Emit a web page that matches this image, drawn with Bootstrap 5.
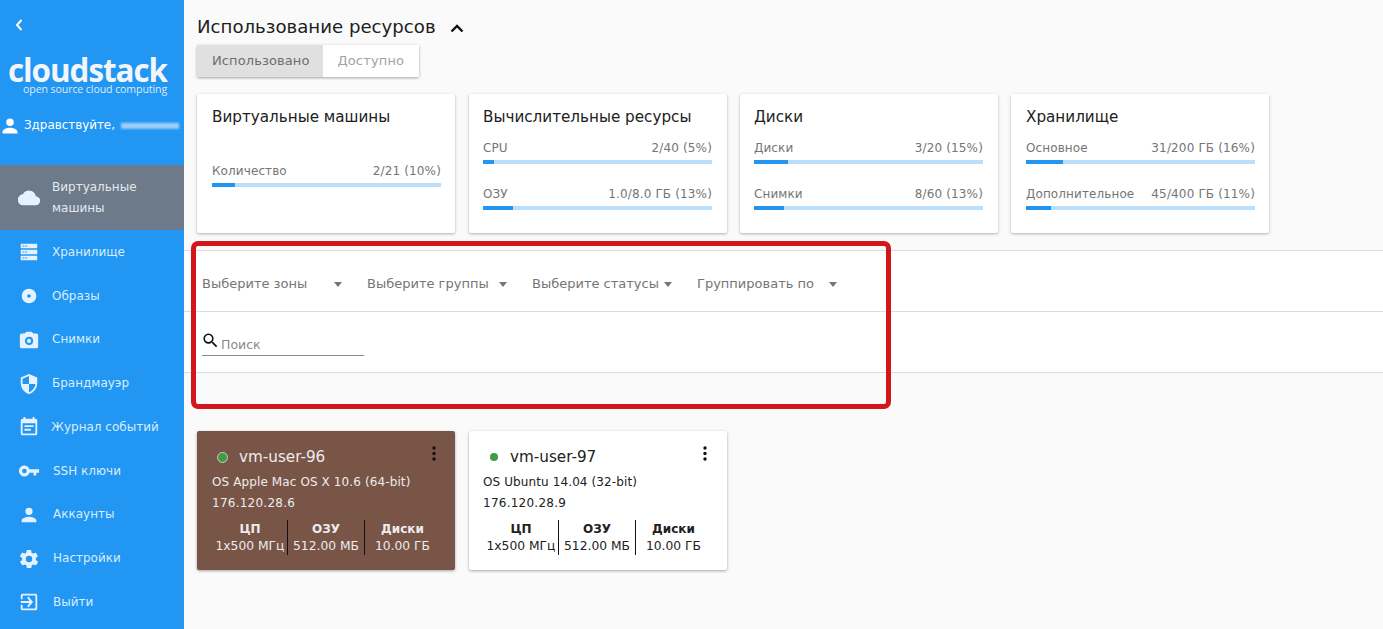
<!DOCTYPE html>
<html lang="ru">
<head>
  <meta charset="UTF-8" />
  <meta name="viewport" content="width=device-width, initial-scale=1.0" />
  <title>CloudStack</title>
  <link href="https://cdn.jsdelivr.net/npm/bootstrap@5.3.0/dist/css/bootstrap.min.css" rel="stylesheet">
  <style>
    html, body { height: 100%; overflow: hidden; }
    body { background: #fafafa; font-family: "DejaVu Sans", sans-serif; color: #212121; font-size: 13px; }
    .app-shell { height: 629px; }
    /* sidebar */
    .side-panel { width: 184px; flex: none; background: #2196f3; color: #fff; height: 629px; overflow: hidden; }
    .side-back { height: 50px; padding: 14px 0 0 14px; }
    .side-logo { height: 50px; margin-top: 3px; padding-left: 8px; line-height: 1; }
    .logo-main { font-family: "Open Sans", sans-serif; font-weight: 700; font-size: 31.4px; letter-spacing: -1.05px; color: #f2f6fa; line-height: 34px; height: 31px; }
    .logo-sub { font-family: "Open Sans", sans-serif; font-size: 10.6px; color: #dcebfa; padding-left: 15px; letter-spacing: -.1px; line-height: 11px; white-space: nowrap; }
    .side-user { margin-top: 8px; height: 30px; font-size: 11.9px; white-space: nowrap; gap: 4px; }
    .blur-name { width: 58px; height: 6px; margin-left: 2px; background: repeating-linear-gradient(180deg, #c4e1fb 0 2px, #8cc6f8 2px 3px); filter: blur(1px); opacity: .85; }
    .side-menu { margin-top: 24px; background: transparent; border-radius: 0; }
    .side-item { background: transparent; border: 0; color: #d9edfe; font-size: 12px; padding: 0 0 0 18px; height: 43.75px; gap: 12px; border-radius: 0 !important; line-height: 21px; }
    .side-item.is-on { background: #6c7a89; height: 65px; color: #e4e9ee; margin-bottom: .4px; }
    .side-item svg { width: 22px; height: 22px; fill: #e3f2fe; flex: none; }
    .nudge-right { margin-left: 1px; }
    .nudge-left { margin-left: -1px; white-space: nowrap; }
    /* main */
    .main-area { min-width: 0; }
    .usage-part { padding: 15px 13px 17px; }
    .usage-title { font-size: 18.15px; font-weight: 400; margin: 0; line-height: 22px; color: #212121; }
    .usage-title svg { width: 24px; height: 24px; margin-left: 9px; }
    .toggle-set { margin-top: 6px; height: 32px; box-shadow: 0 1px 3px rgba(0,0,0,.35); border-radius: 2px; background: #fff; width: max-content; }
    .toggle-btn { border: 0; border-radius: 0 !important; font-size: 13px; padding: 0 14px 0 15px; color: #757575; background: #fff; letter-spacing: .1px; }
    .toggle-btn.is-on { background: #e0e0e0; color: #6e6e6e; padding: 0 15px; }
    .toggle-btn.is-off { color: #a3a3a3; padding: 0 15px 0 14px; letter-spacing: .15px; }
    .usage-cards { margin-top: 17px; gap: 13px; }
    .usage-box { width: 258px; height: 139px; border: 0; border-radius: 2px; box-shadow: 0 1px 3px rgba(0,0,0,.3); background: #fff; padding: 13px 14px 0 15px; }
    .usage-box:nth-child(2) { margin-left: 1px; }
    .usage-box:nth-child(2), .usage-box:nth-child(3) { padding-left: 14px; padding-right: 15px; }
    .usage-box h6 { font-size: 15.2px; font-weight: 400; margin: 0; line-height: 21px; }
    .meter-stack { height: 78px; margin-top: 8px; gap: 22px; }
    .meter-text { font-size: 12px; color: #757575; line-height: 16px; white-space: nowrap; letter-spacing: .1px; }
    .meter-text span + span { letter-spacing: .15px; }
    .meter-bar { height: 4px; background: #bbdefb; border-radius: 0; margin-top: 4px; }
    .meter-bar .progress-bar { background: #2196f3; }
    .filter-row { height: 61px; border-top: 1px solid #dcdcdc; background: #fff; padding-left: 18px; font-size: 13px; color: #757575; }
    .filter-top { padding-top: 6px; gap: 25px; }
    .filter-end { border-bottom: 1px solid #dcdcdc; height: 62px; }
    .filter-pick { width: 140px; color: #757575; font-size: 13px; padding: 0; white-space: nowrap; display: flex; align-items: center; justify-content: space-between; }
    .filter-pick::after { content: ""; width: 0; height: 0; border-left: 4.5px solid transparent; border-right: 4.5px solid transparent; border-top: 5px solid #757575; }
    .search-wrap { width: 162px; height: 26px; border-bottom: 1px solid #8a8a8a; margin-top: 18px; gap: 0; }
    .search-wrap svg { width: 19px; height: 19px; flex: none; margin-top: -5px; margin-left: -1px; }
    .search-wrap input { border: 0; outline: 0; padding: 6px 0 0 1px; background: transparent; font-size: 12.5px; width: 130px; }
    .search-wrap input::placeholder { color: #8a8a8a; }
    .vm-row { padding: 58px 13px 0; gap: 14px; }
    .vm-box { width: 258px; height: 139px; border: 0; border-radius: 2px; box-shadow: 0 1px 3px rgba(0,0,0,.35); background: #fff; padding: 15px 15px 0; position: relative; color: #212121; font-size: 12px; }
    .vm-box + .vm-box { padding-left: 14px; }
    .vm-box + .vm-box .vm-name { padding-left: 7px; }
    .vm-box + .vm-box .vm-more { right: 14px; }
    .vm-box.is-picked { background: #795548; color: #ececec; }
    .vm-name { font-size: 15.2px; line-height: 22px; gap: 12px; padding-left: 6px; }
    .vm-dot { width: 8px; height: 8px; background: #419b45; border-radius: 50%; flex: none; }
    .is-picked .vm-dot { width: 11px; height: 11px; border: 1px solid #c8d0c0; margin-left: -1px; margin-right: -1px; }
    .vm-more { position: absolute; top: 14px; right: 13px; width: 16px; height: 18px; }
    .vm-line { line-height: 21px; white-space: nowrap; letter-spacing: .11px; }
    .vm-ip { letter-spacing: .25px; }
    .vm-stats { margin: 6px 0 0 1px; font-size: 12.3px; flex-wrap: nowrap; }
    .vm-stat { text-align: center; line-height: 17px; white-space: nowrap; height: 35px; padding-top: 1px; }
    .vm-stat:nth-child(1) { flex: 0 0 74px; }
    .vm-stat:nth-child(2) { flex: 0 0 77px; }
    .vm-stat:nth-child(3) { flex: 0 0 76px; }
    .vm-stat b { display: block; font-weight: 700; font-size: 12px; }
    .vm-stat + .vm-stat { border-left: 1px solid #111; }
    .mark-box { position: absolute; left: 191px; top: 241px; width: 700px; height: 168px; border: 5px solid #d3161c; border-radius: 7px; pointer-events: none; }
  </style>
</head>
<body>
  <div class="d-flex app-shell position-relative">

    <!-- Sidebar -->
    <aside class="side-panel">
      <div class="side-back">
        <svg width="10" height="14" viewBox="0 0 10 14"><path d="M7.5 2 3 7l4.5 5" fill="none" stroke="#fff" stroke-width="2"/></svg>
      </div>
      <div class="side-logo">
        <div class="logo-main">cloudstack</div>
        <div class="logo-sub">open source cloud computing</div>
      </div>
      <div class="side-user d-flex align-items-center">
        <svg width="20" height="20" viewBox="0 0 24 24" fill="#fff"><path d="M12 12a4.5 4.5 0 1 0 0-9 4.5 4.5 0 0 0 0 9Zm0 2c-3.3 0-9 1.7-9 5v2h18v-2c0-3.3-5.700-5-9-5Z"/></svg>
        <span>Здравствуйте,</span><span class="blur-name"></span>
      </div>
      <div class="list-group side-menu">
        <a class="list-group-item side-item is-on d-flex align-items-center">
          <svg viewBox="0 0 24 24"><path d="M19.400 10A7.500 7.500 0 0 0 5.400 8 6 6 0 0 0 6 20h13a5 5 0 0 0 .4-10Z"/></svg>
          <span>Виртуальные<br>машины</span>
        </a>
        <a class="list-group-item side-item d-flex align-items-center">
          <svg viewBox="0 0 24 24"><path d="M3 3h18v5H3zM3 9.500h18v5H3zM3 16h18v5H3z"/><path fill="#2196f3" d="M5 5h2v1H5zM8 5h2v1H8zM5 11.500h2v1H5zM8 11.500h2v1H8zM5 18h2v1H5zM8 18h2v1H8z"/></svg>
          <span>Хранилище</span>
        </a>
        <a class="list-group-item side-item d-flex align-items-center">
          <svg viewBox="0 0 24 24"><path fill-rule="evenodd" d="M12 4a8 8 0 1 0 0 16 8 8 0 0 0 0-16Zm0 6a2 2 0 1 1 0 4 2 2 0 0 1 0-4Z"/></svg>
          <span>Образы</span>
        </a>
        <a class="list-group-item side-item d-flex align-items-center">
          <svg viewBox="0 0 24 24"><path fill-rule="evenodd" d="M9 3 7.200 5H4a2 2 0 0 0-2 2v12a2 2 0 0 0 2 2h16a2 2 0 0 0 2-2V7a2 2 0 0 0-2-2h-3.200L15 3H9Zm3 14.500a4.500 4.500 0 1 1 0-9 4.500 4.500 0 0 1 0 9Zm0-2.200a2.300 2.300 0 1 0 0-4.600 2.300 2.300 0 0 0 0 4.600Z"/></svg>
          <span>Снимки</span>
        </a>
        <a class="list-group-item side-item d-flex align-items-center">
          <svg viewBox="0 0 24 24"><path fill-rule="evenodd" d="M12 1 3 5v6c0 5.500 3.800 10.700 9 12 5.200-1.300 9-6.500 9-12V5l-9-4Zm0 11h7c-.5 4.100-3.300 7.800-7 8.900V12H5V6.300l7-3.100V12Z"/></svg>
          <span>Брандмауэр</span>
        </a>
        <a class="list-group-item side-item d-flex align-items-center">
          <svg viewBox="0 0 24 24"><path fill-rule="evenodd" d="M19 3h-1V1h-2v2H8V1H6v2H5a2 2 0 0 0-2 2v14a2 2 0 0 0 2 2h14a2 2 0 0 0 2-2V5a2 2 0 0 0-2-2Zm0 16H5V8h14v11ZM7 10h10v2H7zm0 4h7v2H7z"/></svg>
          <span class="nudge-left">Журнал событий</span>
        </a>
        <a class="list-group-item side-item d-flex align-items-center">
          <svg viewBox="0 0 24 24"><path fill-rule="evenodd" d="M12.600 10a6 6 0 1 0 0 4H17v3h3v-3h3v-4H12.600ZM7 14.500a2.500 2.500 0 1 1 0-5 2.500 2.500 0 0 1 0 5Z"/></svg>
          <span class="nudge-right">SSH ключи</span>
        </a>
        <a class="list-group-item side-item d-flex align-items-center">
          <svg viewBox="0 0 24 24"><path d="M12 12a4 4 0 1 0 0-8 4 4 0 0 0 0 8Zm0 2c-2.700 0-8 1.300-8 4v2h16v-2c0-2.700-5.300-4-8-4Z"/></svg>
          <span class="nudge-right">Аккаунты</span>
        </a>
        <a class="list-group-item side-item d-flex align-items-center">
          <svg viewBox="0 0 24 24"><path fill-rule="evenodd" d="M19.400 13c0-.3.1-.6.1-1s0-.7-.1-1l2.100-1.600c.2-.1.2-.4.1-.6l-2-3.500c-.1-.2-.4-.3-.6-.2l-2.500 1a7 7 0 0 0-1.700-1l-.4-2.600c0-.3-.2-.4-.5-.4h-4c-.3 0-.5.100-.5.400l-.4 2.600a7 7 0 0 0-1.700 1l-2.500-1c-.2-.1-.5 0-.6.2l-2 3.500c-.1.200-.1.500.1.600L4.600 11c0 .3-.1.700-.1 1s0 .7.1 1l-2.100 1.600c-.2.1-.2.4-.1.600l2 3.500c.1.200.4.300.6.200l2.500-1c.5.400 1.100.700 1.700 1l.4 2.600c0 .3.200.4.500.4h4c.3 0 .5-.1.500-.4l.4-2.600a7 7 0 0 0 1.700-1l2.500 1c.2.1.5 0 .6-.2l2-3.500c.1-.2.1-.5-.1-.6L19.400 13ZM12 15.500a3.500 3.500 0 1 1 0-7 3.500 3.500 0 0 1 0 7Z"/></svg>
          <span class="nudge-right">Настройки</span>
        </a>
        <a class="list-group-item side-item d-flex align-items-center">
          <svg viewBox="0 0 24 24"><path fill-rule="evenodd" d="M10 16.600 11.400 18l5-6-5-6L10 7.400l2.600 3.600H3v2h9.600L10 16.600ZM19 3H5a2 2 0 0 0-2 2v4h2V5h14v14H5v-4H3v4a2 2 0 0 0 2 2h14a2 2 0 0 0 2-2V5a2 2 0 0 0-2-2Z"/></svg>
          <span class="nudge-right">Выйти</span>
        </a>
      </div>
    </aside>

    <!-- Main -->
    <main class="main-area flex-grow-1">
      <section class="usage-part">
        <h5 class="usage-title d-flex align-items-center">Использование ресурсов
          <svg viewBox="0 0 24 24"><path d="M6.500 16.500 12 11l5.500 5.500" fill="none" stroke="#111" stroke-width="2.400"/></svg>
        </h5>
        <div class="btn-group toggle-set">
          <button class="btn toggle-btn is-on">Использовано</button>
          <button class="btn toggle-btn is-off">Доступно</button>
        </div>
        <div class="d-flex usage-cards">
          <div class="card usage-box">
            <h6>Виртуальные машины</h6>
            <div class="meter-stack d-flex flex-column justify-content-center">
              <div>
                <div class="d-flex justify-content-between meter-text"><span>Количество</span><span>2/21 (10%)</span></div>
                <div class="progress meter-bar"><div class="progress-bar" style="width:10%"></div></div>
              </div>
            </div>
          </div>
          <div class="card usage-box">
            <h6>Вычислительные ресурсы</h6>
            <div class="meter-stack d-flex flex-column justify-content-center">
              <div>
                <div class="d-flex justify-content-between meter-text"><span>CPU</span><span>2/40 (5%)</span></div>
                <div class="progress meter-bar"><div class="progress-bar" style="width:5%"></div></div>
              </div>
              <div>
                <div class="d-flex justify-content-between meter-text"><span>ОЗУ</span><span>1.0/8.0 ГБ (13%)</span></div>
                <div class="progress meter-bar"><div class="progress-bar" style="width:13%"></div></div>
              </div>
            </div>
          </div>
          <div class="card usage-box">
            <h6>Диски</h6>
            <div class="meter-stack d-flex flex-column justify-content-center">
              <div>
                <div class="d-flex justify-content-between meter-text"><span>Диски</span><span>3/20 (15%)</span></div>
                <div class="progress meter-bar"><div class="progress-bar" style="width:15%"></div></div>
              </div>
              <div>
                <div class="d-flex justify-content-between meter-text"><span>Снимки</span><span>8/60 (13%)</span></div>
                <div class="progress meter-bar"><div class="progress-bar" style="width:13%"></div></div>
              </div>
            </div>
          </div>
          <div class="card usage-box">
            <h6>Хранилище</h6>
            <div class="meter-stack d-flex flex-column justify-content-center">
              <div>
                <div class="d-flex justify-content-between meter-text"><span>Основное</span><span>31/200 ГБ (16%)</span></div>
                <div class="progress meter-bar"><div class="progress-bar" style="width:16%"></div></div>
              </div>
              <div>
                <div class="d-flex justify-content-between meter-text"><span>Дополнительное</span><span>45/400 ГБ (11%)</span></div>
                <div class="progress meter-bar"><div class="progress-bar" style="width:11%"></div></div>
              </div>
            </div>
          </div>
        </div>
      </section>

      <div class="filter-row filter-top d-flex align-items-center">
        <div class="filter-pick">Выберите зоны</div>
        <div class="filter-pick">Выберите группы</div>
        <div class="filter-pick">Выберите статусы</div>
        <div class="filter-pick">Группировать по</div>
      </div>
      <div class="filter-row filter-end">
        <div class="search-wrap d-flex align-items-center">
          <svg viewBox="0 0 24 24"><path d="M15.500 14h-.79l-.28-.27A6.471 6.471 0 0 0 16 9.500 6.500 6.500 0 1 0 9.500 16c1.610 0 3.090-.59 4.230-1.570l.27.28v.79l5 4.990L20.490 19l-4.990-5Zm-6 0C7.010 14 5 11.990 5 9.500S7.010 5 9.500 5 14 7.010 14 9.500 11.990 14 9.500 14Z" fill="#111"/></svg>
          <input type="text" placeholder="Поиск">
        </div>
      </div>

      <div class="d-flex vm-row">
        <div class="card vm-box is-picked">
          <div class="vm-name d-flex align-items-center"><span class="vm-dot"></span>vm-user-96</div>
          <svg class="vm-more" viewBox="0 0 16 18"><g fill="#111"><circle cx="8" cy="3" r="1.700"/><circle cx="8" cy="8.500" r="1.700"/><circle cx="8" cy="14" r="1.700"/></g></svg>
          <div class="vm-line mt-1">OS Apple Mac OS X 10.6 (64-bit)</div>
          <div class="vm-line vm-ip">176.120.28.6</div>
          <div class="row g-0 vm-stats">
            <div class="vm-stat"><b>ЦП</b>1x500 МГц</div>
            <div class="vm-stat"><b>ОЗУ</b>512.00 МБ</div>
            <div class="vm-stat"><b>Диски</b>10.00 ГБ</div>
          </div>
        </div>
        <div class="card vm-box">
          <div class="vm-name d-flex align-items-center"><span class="vm-dot"></span>vm-user-97</div>
          <svg class="vm-more" viewBox="0 0 16 18"><g fill="#111"><circle cx="8" cy="3" r="1.700"/><circle cx="8" cy="8.500" r="1.700"/><circle cx="8" cy="14" r="1.700"/></g></svg>
          <div class="vm-line mt-1">OS Ubuntu 14.04 (32-bit)</div>
          <div class="vm-line vm-ip">176.120.28.9</div>
          <div class="row g-0 vm-stats">
            <div class="vm-stat"><b>ЦП</b>1x500 МГц</div>
            <div class="vm-stat"><b>ОЗУ</b>512.00 МБ</div>
            <div class="vm-stat"><b>Диски</b>10.00 ГБ</div>
          </div>
        </div>
      </div>
    </main>

    <!-- annotation over the filter bar -->
    <div class="mark-box"></div>
  </div>
</body>
</html>
